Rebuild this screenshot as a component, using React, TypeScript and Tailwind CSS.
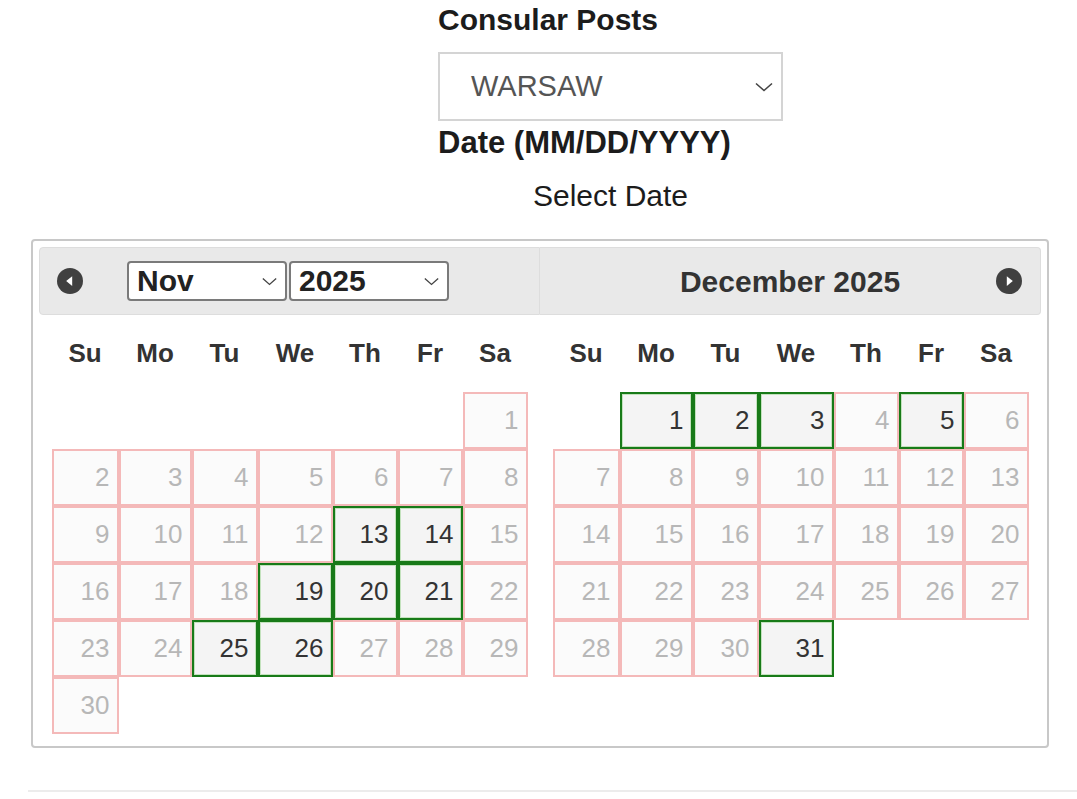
import React from 'react';

type Day = { n: number; open: boolean } | null;

const COLS = 'grid-cols-[67px_73px_66px_75px_65px_65px_65px]';
const DOW = ['Su', 'Mo', 'Tu', 'We', 'Th', 'Fr', 'Sa'];

function buildMonth(offset: number, total: number, open: number[]): Day[] {
  const cells: Day[] = [];
  for (let i = 0; i < offset; i++) cells.push(null);
  for (let d = 1; d <= total; d++) cells.push({ n: d, open: open.includes(d) });
  return cells;
}

const november = buildMonth(6, 30, [13, 14, 19, 20, 21, 25, 26]);
const december = buildMonth(1, 31, [1, 2, 3, 5, 31]);

function Chevron({ className }: { className?: string }) {
  return (
    <svg className={className} viewBox="0 0 18 10" fill="none">
      <path d="M1 1.5 L9 8.5 L17 1.5" stroke="#444" strokeWidth="1.6" />
    </svg>
  );
}

function NavIcon({ dir }: { dir: 'prev' | 'next' }) {
  return (
    <svg width="26" height="26" viewBox="0 0 24 24">
      <circle cx="12" cy="12" r="12" fill="#404040" />
      {dir === 'prev' ? (
        <path d="M8.5 12 L14 7.5 L14 16.5 Z" fill="#fff" />
      ) : (
        <path d="M15.5 12 L10 7.5 L10 16.5 Z" fill="#fff" />
      )}
    </svg>
  );
}

function FakeSelect({ value, width }: { value: string; width: string }) {
  return (
    <div
      className={`${width} h-[40px] bg-white border-2 border-[#7a7a7a] rounded-[4px] flex items-center justify-between pl-[8px] pr-[8px]`}
    >
      <span className="text-[30px] font-bold leading-none text-[#222]">{value}</span>
      <Chevron className="w-[15px] h-[9px]" />
    </div>
  );
}

function MonthGrid({ days }: { days: Day[] }) {
  return (
    <div className="w-[476px] mx-auto mb-[12px]">
      <div className={`grid ${COLS} h-[77px] items-center`}>
        {DOW.map((d) => (
          <div key={d} className="text-center text-[26px] font-bold text-[#333]">
            {d}
          </div>
        ))}
      </div>
      <div className={`grid ${COLS}`}>
        {days.map((day, i) =>
          day === null ? (
            <div key={i} className="h-[57px]" />
          ) : day.open ? (
            <div
              key={i}
              className="h-[57px] border-2 border-[#187a18] bg-[#f4f4f4] shadow-[inset_0_0_0_1px_#c3e2bd] flex items-center justify-end pr-[7px] text-[26px] text-[#333]"
            >
              {day.n}
            </div>
          ) : (
            <div
              key={i}
              className="h-[57px] border-2 border-[#f4b9b9] bg-[#fbfbfb] flex items-center justify-end pr-[7px] text-[26px] text-[#b7b7b7]"
            >
              {day.n}
            </div>
          )
        )}
      </div>
    </div>
  );
}

export default function App() {
  return (
    <div className="bg-white min-h-[799px] font-['Liberation_Sans',Arial,sans-serif] text-[#1c1c1c]">
      <div className="ml-[438px] w-[345px] pt-[3px]">
        <div className="text-[30px] font-bold leading-[34px]">Consular Posts</div>
        <div className="mt-[15px] h-[69px] border-2 border-[#d4d4d4] flex items-center justify-between pl-[31px] pr-[8px]">
          <span className="text-[29px] text-[#555]">WARSAW</span>
          <Chevron className="w-[18px] h-[10px]" />
        </div>
        <div className="mt-[5px] text-[31px] font-bold leading-[34px]">Date (MM/DD/YYYY)</div>
        <div className="mt-[19px] text-center text-[30px] leading-[34px]">Select Date</div>
      </div>

      <div className="ml-[31px] mt-[26px] w-[1018px] border-2 border-[#c8c8c8] rounded-[4px] px-[6px] pt-[6px] flex">
        <div className="w-[501px]">
          <div className="h-[68px] bg-[#e9e9e9] border border-[#dddddd] rounded-l-[4px] flex items-center pl-[17px]">
            <NavIcon dir="prev" />
            <div className="ml-[44px] flex gap-[2px]">
              <FakeSelect value="Nov" width="w-[160px]" />
              <FakeSelect value="2025" width="w-[160px]" />
            </div>
          </div>
          <MonthGrid days={november} />
        </div>
        <div className="w-[501px]">
          <div className="relative h-[68px] bg-[#e9e9e9] border border-l-0 border-[#dddddd] rounded-r-[4px] flex items-center justify-center">
            <span className="text-[30px] font-bold text-[#333]">December 2025</span>
            <div className="absolute right-[18px] top-[20px]">
              <NavIcon dir="next" />
            </div>
          </div>
          <MonthGrid days={december} />
        </div>
      </div>

      <div className="ml-[28px] mt-[42px] h-[2px] bg-[#ececec]" />
    </div>
  );
}
